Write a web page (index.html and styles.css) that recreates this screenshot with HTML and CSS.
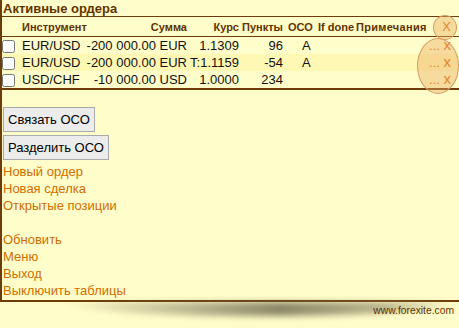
FILE: index.html
```html
<!DOCTYPE html>
<html lang="ru">
  <head>
    <meta charset="UTF-8" />
    <title>Активные ордера</title>
    <link rel="stylesheet" href="styles.css">
  </head>
  <body>
    <div class="panel">
      <div class="title">Активные ордера</div>
      <table class="orders">
        <colgroup>
          <col class="w-chk" />
          <col class="w-sym" />
          <col class="w-amt" />
          <col class="w-rate" />
          <col class="w-pts" />
          <col class="w-oco" />
          <col class="w-done" />
          <col class="w-note" />
          <col class="w-x" />
        </colgroup>
        <thead>
          <tr>
            <th></th>
            <th class="c-sym">Инструмент</th>
            <th class="c-amt">Сумма</th>
            <th class="c-rate">Курс</th>
            <th class="c-pts">Пункты</th>
            <th class="c-oco">ОСО</th>
            <th class="c-done">If done</th>
            <th class="c-note">Примечания</th>
            <th class="c-x"><a href="#">X</a></th>
          </tr>
        </thead>
        <tbody>
          <tr>
            <td class="c-chk"><input type="checkbox" /></td>
            <td class="c-sym">EUR/USD</td>
            <td class="c-amt">-200 000.00 EUR</td>
            <td class="c-rate">1.1309</td>
            <td class="c-pts">96</td>
            <td class="c-oco">A</td>
            <td></td>
            <td></td>
            <td class="c-x"><a href="#">...</a> <a href="#" class="del">x</a></td>
          </tr>
          <tr class="hl">
            <td class="c-chk"><input type="checkbox" /></td>
            <td class="c-sym">EUR/USD</td>
            <td class="c-amt">-200 000.00 EUR</td>
            <td class="c-rate">T:1.1159</td>
            <td class="c-pts">-54</td>
            <td class="c-oco">A</td>
            <td></td>
            <td></td>
            <td class="c-x"><a href="#">...</a> <a href="#" class="del">x</a></td>
          </tr>
          <tr>
            <td class="c-chk"><input type="checkbox" /></td>
            <td class="c-sym">USD/CHF</td>
            <td class="c-amt">-10 000.00 USD</td>
            <td class="c-rate">1.0000</td>
            <td class="c-pts">234</td>
            <td></td>
            <td></td>
            <td></td>
            <td class="c-x"><a href="#">...</a> <a href="#" class="del">x</a></td>
          </tr>
        </tbody>
      </table>
      <span class="ring ring-small"></span>
      <span class="ring ring-big"></span>

      <div class="actions">
        <button type="button">Связать ОСО</button>
        <button type="button">Разделить ОСО</button>
      </div>

      <div class="links">
        <a href="#">Новый ордер</a>
        <a href="#">Новая сделка</a>
        <a href="#">Открытые позиции</a>
        <div class="spacer"></div>
        <a href="#">Обновить</a>
        <a href="#">Меню</a>
        <a href="#">Выход</a>
        <a href="#">Выключить таблицы</a>
      </div>
    </div>
    <div class="footer">
      <div class="shadow"></div>
      <span class="site">www.forexite.com</span>
    </div>
  </body>
</html>
```

FILE: styles.css
```css
body {
  margin: 0;
  background: #fffdc9;
  font-family: "Liberation Sans", Arial, sans-serif;
  font-size: 13px;
  color: #111;
}

.panel {
  position: relative;
  height: 302px;
  border-left: 2px solid #6e3c0a;
  border-bottom: 2px solid #6e3c0a;
  box-sizing: border-box;
}

.title {
  font-size: 13px;
  font-weight: bold;
  color: #5f3300;
  padding: 1px 0 0 1px;
  height: 15px;
  border-bottom: 1px solid #6e3c0a;
}

/* orders table */
.orders {
  width: 457px;
  table-layout: fixed;
  border-collapse: separate;
  border-spacing: 0;
}

.w-chk { width: 18px; }
.w-sym { width: 66px; }
.w-amt { width: 103px; }
.w-rate { width: 50px; }
.w-pts { width: 44px; }
.w-oco { width: 33px; }
.w-done { width: 40px; }
.w-note { width: 72px; }
.w-x { width: 31px; }

.orders th {
  font-size: 11px;
  font-weight: bold;
  color: #5f3300;
  height: 19px;
  padding: 0;
  white-space: nowrap;
  overflow: visible;
  border-bottom: 1px solid #6e3c0a;
}

.orders td {
  height: 17px;
  padding: 0;
  white-space: nowrap;
}

.orders tbody tr:last-child td {
  border-bottom: 2px solid #6e3c0a;
}

.orders tr.hl td {
  background: #fff8b5;
}

.c-chk input {
  margin: 0;
  width: 13px;
  height: 13px;
  vertical-align: middle;
}

.c-sym { text-align: left; padding-left: 2px !important; }
.c-amt { text-align: right; padding-right: 2px !important; }
.c-rate { text-align: right; }
.c-pts { text-align: right; }
th.c-oco { text-align: left; padding-left: 5px; }
td.c-oco { padding-left: 19px; }
th.c-done { text-align: left; padding-left: 2px; }
th.c-note { text-align: left; letter-spacing: 0.3px; }

.c-x {
  text-align: right;
  padding-right: 8px !important;
}

.c-x a {
  color: #e06a00;
  text-decoration: none;
}

.c-x a.del {
  font-size: 15px;
  line-height: 13px;
}

th.c-x a {
  font-size: 13px;
  font-weight: normal;
}

.ring {
  position: absolute;
  border: 1px solid #d69c62;
  background: rgba(234, 172, 100, 0.42);
  border-radius: 50%;
  box-sizing: border-box;
}

.ring-small {
  left: 431px;
  top: 15px;
  width: 24px;
  height: 25px;
}

.ring-big {
  left: 415px;
  top: 38px;
  width: 42px;
  height: 56px;
}

/* buttons */
.actions {
  display: flex;
  flex-direction: column;
  align-items: flex-start;
  gap: 3px;
  padding: 17px 0 0 1px;
}

.actions button {
  font-family: "Liberation Sans", Arial, sans-serif;
  font-size: 13px;
  color: #000;
  background: #ececec;
  border: 1px solid #a9a9a9;
  padding: 0 4px;
  height: 25px;
}

/* menu links */
.links {
  padding: 3px 0 0 1px;
}

.links a {
  display: block;
  color: #d36d00;
  text-decoration: none;
  line-height: 17px;
}

.spacer {
  height: 17px;
}

.footer {
  position: relative;
  height: 26px;
}

.shadow {
  margin: 0 0 0 60px;
  height: 14px;
  background: linear-gradient(to right, rgba(255, 253, 201, 0), rgba(110, 105, 80, 0.8) 55%, rgba(140, 135, 100, 0.6) 82%, rgba(255, 253, 201, 0));
  border-radius: 0 0 50% 50% / 0 0 100% 100%;
  filter: blur(3px);
}

.site {
  position: absolute;
  right: 5px;
  top: 3px;
  font-size: 10.3px;
  color: #5f3300;
}
```
